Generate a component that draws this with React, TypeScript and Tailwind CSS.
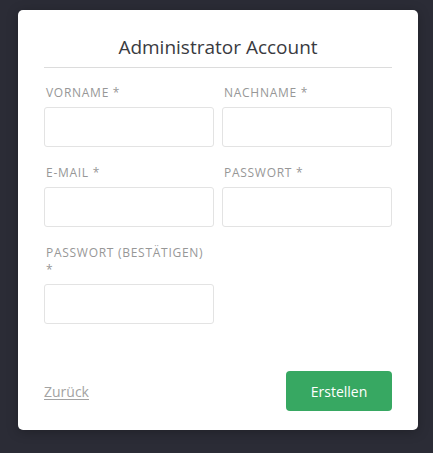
import React from "react";

const font = { fontFamily: '"Open Sans", "Noto Sans", sans-serif' };

function Field({ label }: { label: React.ReactNode }) {
  return (
    <div className="flex flex-col">
      <label className="text-[12px] leading-[17px] tracking-[0.06em] text-[#979797] uppercase mb-[6px] px-[2px]">
        {label}
      </label>
      <input
        type="text"
        className="h-10 w-full rounded-[3px] border border-[#e3e3e3] bg-white px-2 text-sm outline-none"
      />
    </div>
  );
}

export default function App() {
  return (
    <div className="min-h-screen bg-[#2b2c36] pt-[10px] pl-[18px]" style={font}>
      <div className="w-[400px] h-[420px] rounded-[5px] bg-white shadow-[0_2px_12px_rgba(0,0,0,0.25)] px-[26px] pt-[24px] flex flex-col">
        <h2 className="text-center text-[19px] leading-[26px] text-[#3a3b3f] pb-[7px] border-b border-[#dcdcdc]">
          Administrator Account
        </h2>
        <div className="grid grid-cols-2 gap-x-2 gap-y-[17px] mt-[16px]">
          <Field label="Vorname *" />
          <Field label="Nachname *" />
          <Field label="E-Mail *" />
          <Field label="Passwort *" />
          <Field label={<>Passwort (Bestätigen)<br />*</>} />
        </div>
        <div className="flex items-center justify-between mt-[47px]">
          <a href="#" className="text-[14px] text-[#a3a3a3] underline underline-offset-2">
            Zurück
          </a>
          <button className="h-10 w-[106px] rounded-[4px] bg-[#37a862] text-white text-[14px] font-medium">
            Erstellen
          </button>
        </div>
      </div>
    </div>
  );
}
